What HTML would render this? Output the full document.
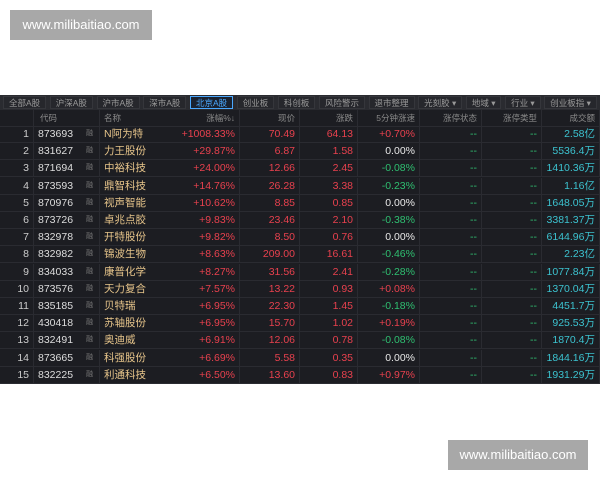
<!DOCTYPE html><html><head><meta charset="utf-8"><style>
body{margin:0;width:600px;height:480px;background:#fff;position:relative;overflow:hidden;font-family:"Liberation Sans","Noto Sans CJK SC",sans-serif}
.wm{position:absolute;background:#a8a8a8;color:#fff;font-size:13px;text-align:center;line-height:30px}
.t{position:absolute;left:0;top:95px;width:600px;height:289px;background:#1c1d22;font-size:10.5px}
.tabs{height:15px;background:#2a2b30;display:flex;justify-content:space-between;padding:1px 3px;box-sizing:border-box}
.tabs span{flex:0 0 auto;padding:0 5px;color:#999;font-size:8.5px;line-height:12px;background:#26272c;border:1px solid #35363b}
.tabs span.a{color:#4aa8ff;border-color:#4aa8ff;background:#1a2230}
.r{position:absolute;left:0;width:600px;height:17px;border-bottom:1px solid #2a2b31;box-sizing:border-box;line-height:16px}
.r div{position:absolute;top:0;height:16px;border-right:1px solid #2a2b31;box-sizing:border-box;white-space:nowrap}
.h{color:#8a8a8a;font-size:8.5px}
.red{color:#e8414e}.grn{color:#2fbf71}.wht{color:#e8e8e8}.cy{color:#3cc3d0}.gld{color:#e6c48a}
</style></head><body>
<div class="wm" style="left:10px;top:10px;width:142px;height:30px">www.milibaitiao.com</div>
<div class="wm" style="left:448px;top:440px;width:140px;height:30px">www.milibaitiao.com</div>
<div class="t">
<div class="tabs"><span>全部A股</span><span>沪深A股</span><span>沪市A股</span><span>深市A股</span><span class="a">北京A股</span><span>创业板</span><span>科创板</span><span>风险警示</span><span>退市整理</span><span>光刻胶 ▾</span><span>地域 ▾</span><span>行业 ▾</span><span>创业板指 ▾</span></div>
<div id="rows"></div>
</div>
<script>
var d=[["873693","N阿为特","+1008.33%","70.49","64.13","+0.70%","2.58亿"],
["831627","力王股份","+29.87%","6.87","1.58","0.00%","5536.4万"],
["871694","中裕科技","+24.00%","12.66","2.45","-0.08%","1410.36万"],
["873593","鼎智科技","+14.76%","26.28","3.38","-0.23%","1.16亿"],
["870976","视声智能","+10.62%","8.85","0.85","0.00%","1648.05万"],
["873726","卓兆点胶","+9.83%","23.46","2.10","-0.38%","3381.37万"],
["832978","开特股份","+9.82%","8.50","0.76","0.00%","6144.96万"],
["832982","锦波生物","+8.63%","209.00","16.61","-0.46%","2.23亿"],
["834033","康普化学","+8.27%","31.56","2.41","-0.28%","1077.84万"],
["873576","天力复合","+7.57%","13.22","0.93","+0.08%","1370.04万"],
["835185","贝特瑞","+6.95%","22.30","1.45","-0.18%","4451.7万"],
["430418","苏轴股份","+6.95%","15.70","1.02","+0.19%","925.53万"],
["832491","奥迪威","+6.91%","12.06","0.78","-0.08%","1870.4万"],
["873665","科强股份","+6.69%","5.58","0.35","0.00%","1844.16万"],
["832225","利通科技","+6.50%","13.60","0.83","+0.97%","1931.29万"]];
var cols=[[0,34,'right'],[34,66,'left'],[100,140,'right'],[240,60,'right'],[300,58,'right'],[358,62,'right'],[420,62,'right'],[482,60,'right'],[542,58,'right']];
function cell(i,txt,cls,extra){var c=cols[i];return '<div class="'+cls+'" style="left:'+c[0]+'px;width:'+c[1]+'px;text-align:'+c[2]+';padding:0 4px;'+(extra||'')+'">'+txt+'</div>';}
var h='<div class="r h" style="top:15px">'+cell(0,'','')+cell(1,'代码','', 'text-align:left;padding-left:6px')+cell(2,'名称','','text-align:left')+cell(2,'涨幅%↓','','left:100px')+cell(3,'现价','')+cell(4,'涨跌','')+cell(5,'5分钟涨速','')+cell(6,'涨停状态','')+cell(7,'涨停类型','')+cell(8,'成交额','')+'</div>';
d.forEach(function(r,i){var top=31+i*17.2;
var f=r[5][0]=='+'?'red':r[5][0]=='-'?'grn':'wht';
h+='<div class="r" style="top:'+top+'px">'+cell(0,i+1,'wht','color:#ccc')+cell(1,r[0]+'<span style="position:absolute;left:52px;color:#777;font-size:7px">融</span>','wht','color:#ddd')+
'<div class="gld" style="left:100px;width:140px;padding-left:4px">'+r[1]+'<span class="red" style="position:absolute;right:4px">'+r[2]+'</span></div>'+
cell(3,r[3],'red')+cell(4,r[4],'red')+cell(5,r[5],f)+cell(6,'--','grn')+cell(7,'--','grn')+cell(8,r[6],'cy')+'</div>';});
document.getElementById('rows').innerHTML=h;
</script>
</body></html>
